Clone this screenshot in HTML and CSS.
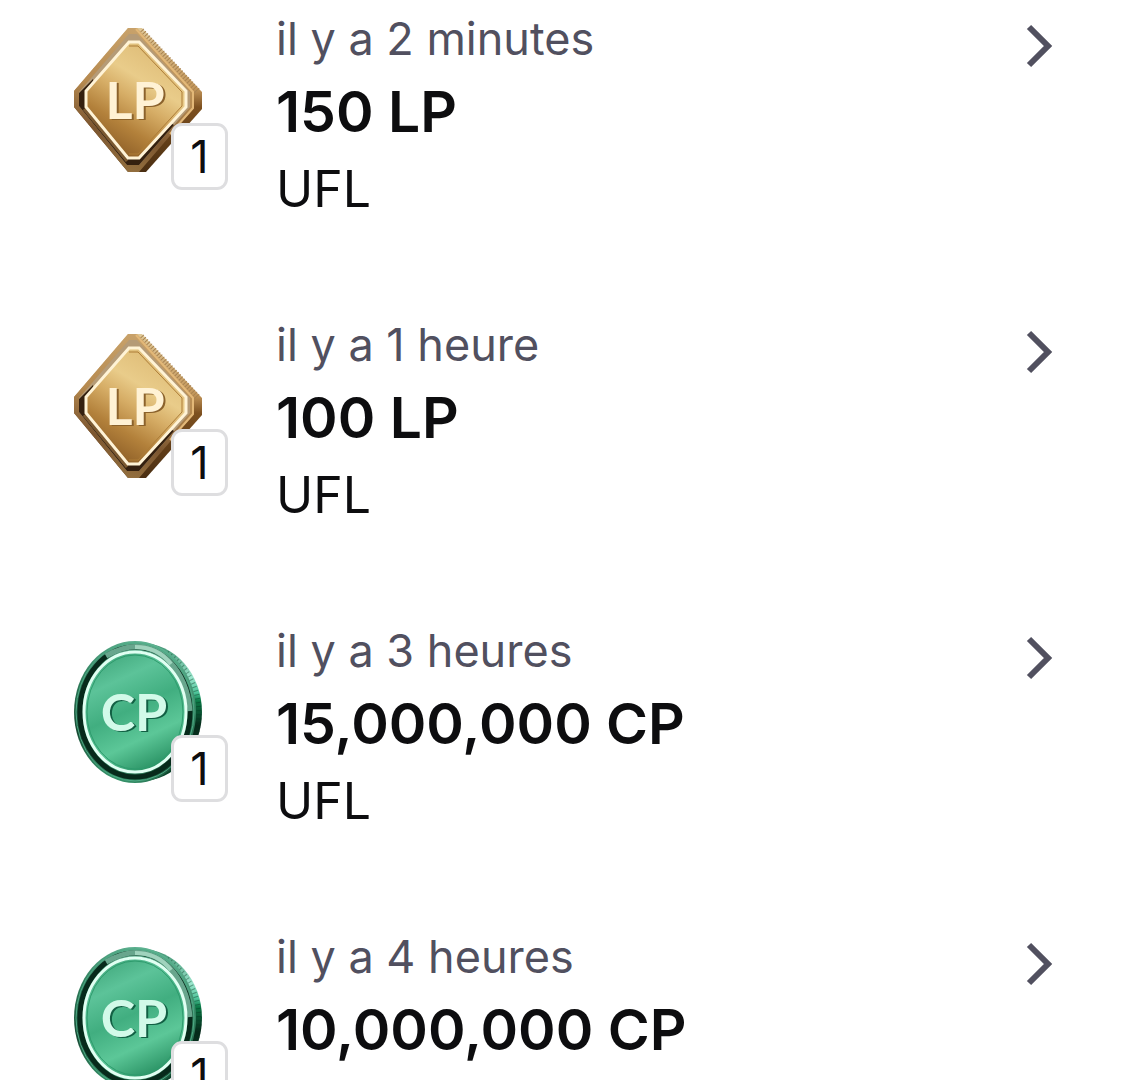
FILE: index.html
```html
<!DOCTYPE html>
<html lang="fr">
<head>
    <meta charset="UTF-8">
    <meta name="viewport" content="width=device-width, initial-scale=1.0">
    <title>Historique - UFL</title>
    <link rel="stylesheet" href="styles.css">
</head>
<body>
    <!-- Shared drawings -->
    <svg class="defs" width="0" height="0" aria-hidden="true">
        <defs>
            <linearGradient id="goldFace" x1="0.75" y1="0.1" x2="0.3" y2="0.95">
                <stop offset="0" stop-color="#dfbd78"/>
                <stop offset="0.3" stop-color="#e9cc8a"/>
                <stop offset="0.5" stop-color="#d6ad66"/>
                <stop offset="0.75" stop-color="#b3813b"/>
                <stop offset="1" stop-color="#8f6028"/>
            </linearGradient>
            <linearGradient id="goldRim" x1="0.6" y1="0" x2="0.4" y2="1">
                <stop offset="0" stop-color="#c9a36c"/>
                <stop offset="0.45" stop-color="#b68a50"/>
                <stop offset="0.75" stop-color="#7c5630"/>
                <stop offset="1" stop-color="#94703f"/>
            </linearGradient>
            <linearGradient id="goldSide" x1="0" y1="0" x2="0" y2="1">
                <stop offset="0" stop-color="#e0c998"/>
                <stop offset="0.42" stop-color="#c4975b"/>
                <stop offset="0.55" stop-color="#7d501f"/>
                <stop offset="1" stop-color="#4a2e12"/>
            </linearGradient>
            <linearGradient id="greenFace" x1="0.2" y1="0" x2="0.6" y2="1">
                <stop offset="0" stop-color="#3fa67a"/>
                <stop offset="0.25" stop-color="#5cc399"/>
                <stop offset="0.5" stop-color="#41ae80"/>
                <stop offset="0.75" stop-color="#5cc798"/>
                <stop offset="1" stop-color="#2a9264"/>
            </linearGradient>
            <linearGradient id="greenRim" x1="0.6" y1="0" x2="0.3" y2="1">
                <stop offset="0" stop-color="#5fb392"/>
                <stop offset="0.4" stop-color="#2e7d5b"/>
                <stop offset="0.75" stop-color="#174a33"/>
                <stop offset="1" stop-color="#3b9d72"/>
            </linearGradient>
            <linearGradient id="greenSide" x1="0" y1="0" x2="0" y2="1">
                <stop offset="0" stop-color="#3b8f6d"/>
                <stop offset="0.25" stop-color="#9be6cd"/>
                <stop offset="0.36" stop-color="#4fc49a"/>
                <stop offset="0.42" stop-color="#0b7a47"/>
                <stop offset="0.6" stop-color="#06291a"/>
                <stop offset="1" stop-color="#0c4a2e"/>
            </linearGradient>

            <symbol id="coin-lp" viewBox="0 0 130 146">
                <path d="M55 1H69L129 65V82L73 145H55L1 80V64Z" fill="url(#goldSide)"/>
                <path d="M68 4L125 65" fill="none" stroke="#a98351" stroke-width="7" stroke-dasharray="1 2"/>
                <path d="M55 1H64L120 64V82L66 145H55L1 80V64Z" fill="url(#goldRim)"/>
                <path d="M63 2L120 65V81L97 107" fill="none" stroke="#e3b878" stroke-width="2"/>
                <path d="M56 7H64L117 65V80L66 138H54L6 79V65Z" fill="#b59b77"/>
                <path d="M20 52L6 66V79L54 138H66L101 98L94 94L64 129H56L13 79V65L21 56Z" fill="#34200f"/>
                <path d="M11 82L54 134" fill="none" stroke="#7b5931" stroke-width="3"/>
                <path d="M56 15H66L113 64V80L66 131H55L13 80V64Z" fill="url(#goldFace)" stroke="#fff3d6" stroke-width="3"/>
                <path d="M56 19H65L109 65V79L65 127H56" fill="none" stroke="#ad7c36" stroke-width="1"/>
                <text class="coin-text" x="64" y="93" fill="#8b622c">LP</text>
                <text class="coin-text" x="62" y="92" fill="#fff2d5">LP</text>
            </symbol>

            <symbol id="coin-cp" viewBox="0 0 130 146">
                <ellipse cx="68" cy="73" rx="61" ry="69" fill="url(#greenSide)"/>
                <path d="M94 14Q126 36 126 76Q126 98 114 116" fill="none" stroke="#04331f" stroke-width="5" stroke-dasharray="1 3" opacity="0.4"/>
                <ellipse cx="62" cy="73" rx="61" ry="71" fill="url(#greenRim)"/>
                <ellipse cx="62" cy="73" rx="59" ry="69" fill="none" stroke="#4eaa85" stroke-width="1"/>
                <ellipse cx="62" cy="73" rx="55" ry="65" fill="none" stroke="#072a1b" stroke-width="5"/>
                <path d="M33 17Q69 -4 96 22Q115 42 117 72" fill="none" stroke="#68a68d" stroke-width="5"/>
                <path d="M62 8Q85 8 98 25" fill="none" stroke="#a0d3bd" stroke-width="4"/>
                <ellipse cx="62" cy="73" rx="51" ry="60" fill="url(#greenFace)" stroke="#e0fff2" stroke-width="3"/>
                <ellipse cx="62" cy="73" rx="48" ry="57" fill="none" stroke="#2e9b6d" stroke-width="1"/>
                <text class="coin-text" x="63" y="93" fill="#126044">CP</text>
                <text class="coin-text" x="61" y="92" fill="#d2fae9">CP</text>
            </symbol>

            <symbol id="chevron" viewBox="0 0 27 44">
                <path d="M3 3L22 22L3 41" fill="none" stroke="#51505f" stroke-width="6"/>
            </symbol>
        </defs>
    </svg>

    <main class="history">
        <a class="item" href="#">
            <div class="item-icon">
                <svg class="coin"><use href="#coin-lp"/></svg>
                <span class="badge">1</span>
            </div>
            <div class="item-info">
                <div class="time">il y a 2 minutes</div>
                <div class="name">150 LP</div>
                <div class="game">UFL</div>
            </div>
            <svg class="chevron"><use href="#chevron"/></svg>
        </a>

        <a class="item" href="#">
            <div class="item-icon">
                <svg class="coin"><use href="#coin-lp"/></svg>
                <span class="badge">1</span>
            </div>
            <div class="item-info">
                <div class="time">il y a 1 heure</div>
                <div class="name">100 LP</div>
                <div class="game">UFL</div>
            </div>
            <svg class="chevron"><use href="#chevron"/></svg>
        </a>

        <a class="item" href="#">
            <div class="item-icon">
                <svg class="coin"><use href="#coin-cp"/></svg>
                <span class="badge">1</span>
            </div>
            <div class="item-info">
                <div class="time">il y a 3 heures</div>
                <div class="name">15,000,000 CP</div>
                <div class="game">UFL</div>
            </div>
            <svg class="chevron"><use href="#chevron"/></svg>
        </a>

        <a class="item" href="#">
            <div class="item-icon">
                <svg class="coin"><use href="#coin-cp"/></svg>
                <span class="badge">1</span>
            </div>
            <div class="item-info">
                <div class="time">il y a 4 heures</div>
                <div class="name">10,000,000 CP</div>
            </div>
            <svg class="chevron"><use href="#chevron"/></svg>
        </a>
    </main>
</body>
</html>
```
FILE: styles.css
```css
/* General Page Styling */
* {
    box-sizing: border-box;
}

body {
    font-family: Inter, "Liberation Sans", sans-serif;
    background: white;
    color: #0d0d0f;
    margin: 0;
}

.defs {
    position: absolute;
}

/* List */
.history {
    display: flex;
    flex-direction: column;
    gap: 85px;
    padding: 6px 72px 0 73px;
}

.item {
    display: flex;
    align-items: flex-start;
    gap: 73px;
    color: inherit;
    text-decoration: none;
}

/* Coin with its count */
.item-icon {
    position: relative;
    flex: none;
    margin-top: 21px;
}

.coin {
    display: block;
    width: 130px;
    height: 146px;
}

.coin-text {
    font-family: Lato, sans-serif;
    font-size: 52px;
    font-weight: bold;
    text-anchor: middle;
}

.badge {
    position: absolute;
    right: -25px;
    bottom: -17px;
    width: 57px;
    height: 67px;
    background: white;
    border: 3px solid #dedee0;
    border-radius: 11px;
    font-size: 45px;
    line-height: 62px;
    text-align: center;
}

/* Texts */
.item-info {
    flex: 1;
}

.time {
    font-size: 45px;
    line-height: 66px;
    color: #51505f;
}

.name {
    font-size: 57px;
    line-height: 80px;
    font-weight: 600;
}

.game {
    font-size: 50px;
    line-height: 75px;
}

.chevron {
    flex: none;
    width: 27px;
    height: 44px;
    margin-top: 18px;
}
```
